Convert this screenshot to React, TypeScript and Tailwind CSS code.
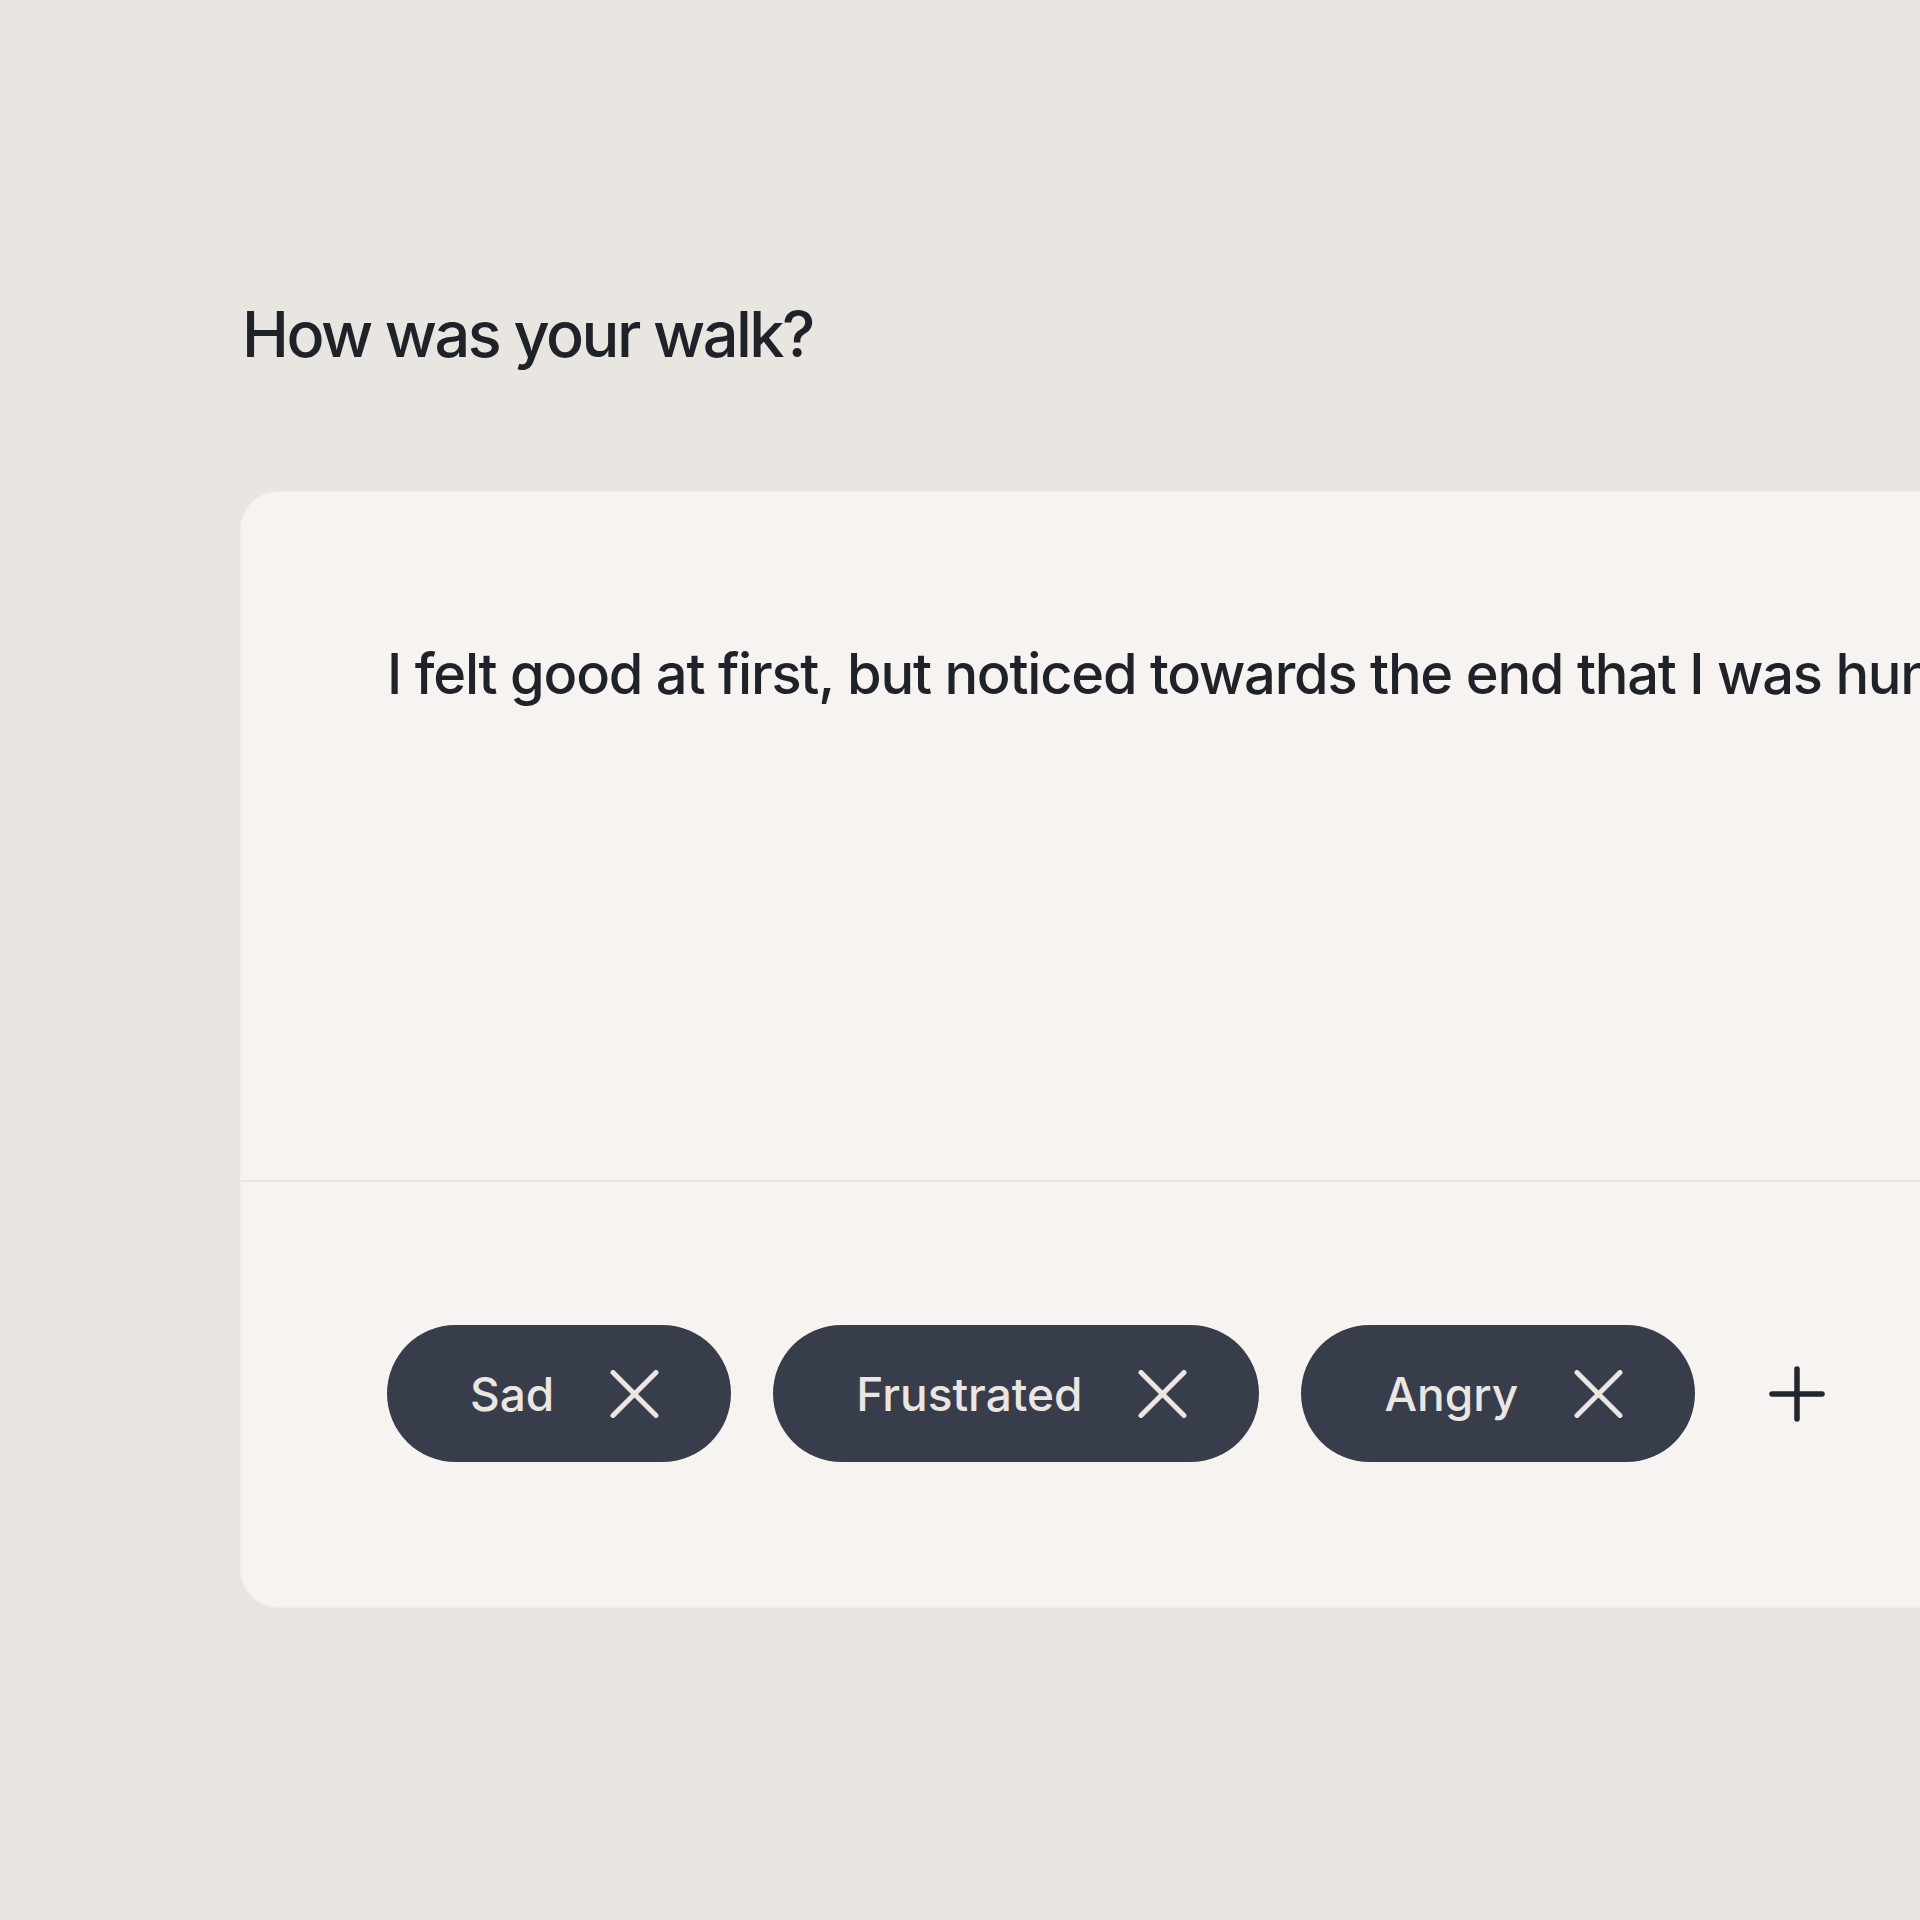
import { useState } from 'react'

const FONT = { fontFamily: 'Inter, "Noto Sans", sans-serif' }

function XIcon() {
  return (
    <svg width="49" height="48" viewBox="0 0 49 48" fill="none">
      <path d="M3 2.5 46 45.5M46 2.5 3 45.5" stroke="#ebe6e2" strokeWidth="5" strokeLinecap="round" />
    </svg>
  )
}

function PlusIcon() {
  return (
    <svg width="56" height="56" viewBox="0 0 56 56" fill="none">
      <path d="M28 3v50M3 28h50" stroke="#22262d" strokeWidth="5.5" strokeLinecap="round" />
    </svg>
  )
}

export default function App() {
  const [tags, setTags] = useState(['Sad', 'Frustrated', 'Angry'])

  return (
    <div className="w-[1920px] h-[1920px] overflow-hidden bg-[#e9e5e1] pl-[240px] pt-[290px]" style={FONT}>
      <h1 className="text-[63px] leading-[88px] font-medium text-[#1f2229] tracking-[-0.04em] pl-[2px]">
        How was your walk?
      </h1>

      {/* Entry card */}
      <div className="mt-[113px] w-[1800px] h-[1117px] bg-[#f7f3f0] rounded-[38px] border border-[#f1ede9] flex flex-col">
        <div className="h-[688px] pl-[146px] pt-[142px]">
          <p className="text-[56px] leading-[80px] font-medium text-[#1f2229] whitespace-nowrap tracking-[-0.022em]">
            I felt good at first, but noticed towards the end that I was hungry and a bit tired.
          </p>
        </div>
        <div className="h-[2px] bg-[#e8e4e0]" />
        <div className="flex-1 flex items-center pl-[146px] gap-[42px] pb-[2px]">
          {tags.map(tag => (
            <button
              key={tag}
              onClick={() => setTags(tags.filter(t => t !== tag))}
              className="h-[137px] rounded-full bg-[#373d4a] pl-[83px] pr-[72px] flex items-center gap-[56px]"
            >
              <span className="text-[46px] leading-none font-medium text-[#ebe6e2]">{tag}</span>
              <XIcon />
            </button>
          ))}
          <button className="ml-[32px] flex items-center">
            <PlusIcon />
          </button>
        </div>
      </div>
    </div>
  )
}
